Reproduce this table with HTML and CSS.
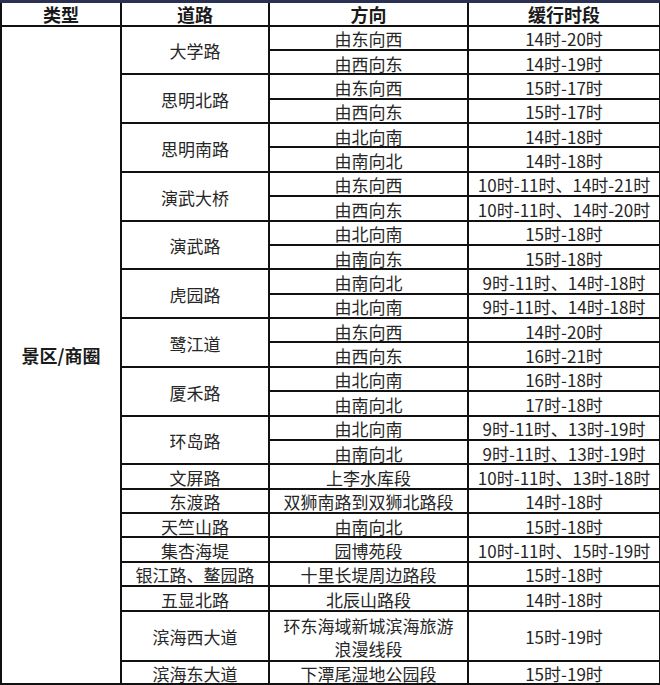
FILE: index.html
```html
<!DOCTYPE html>
<html lang="zh-CN">
<head>
<meta charset="utf-8">
<link rel="stylesheet" href="styles.css">
</head>
<body>
<table class="grid">
  <colgroup>
    <col class="c-type"><col class="c-road"><col class="c-dir"><col class="c-time">
  </colgroup>
  <thead>
    <tr class="head"><th>类型</th><th>道路</th><th>方向</th><th>缓行时段</th></tr>
  </thead>
  <tbody>
    <tr><td class="type" rowspan="26">景区/商圈</td><td rowspan="2">大学路</td><td>由东向西</td><td>14时-20时</td></tr>
    <tr><td>由西向东</td><td>14时-19时</td></tr>
    <tr><td rowspan="2">思明北路</td><td>由东向西</td><td>15时-17时</td></tr>
    <tr><td>由西向东</td><td>15时-17时</td></tr>
    <tr><td rowspan="2">思明南路</td><td>由北向南</td><td>14时-18时</td></tr>
    <tr><td>由南向北</td><td>14时-18时</td></tr>
    <tr><td rowspan="2">演武大桥</td><td>由东向西</td><td>10时-11时、14时-21时</td></tr>
    <tr><td>由西向东</td><td>10时-11时、14时-20时</td></tr>
    <tr><td rowspan="2">演武路</td><td>由北向南</td><td>15时-18时</td></tr>
    <tr><td>由南向东</td><td>15时-18时</td></tr>
    <tr><td rowspan="2">虎园路</td><td>由南向北</td><td>9时-11时、14时-18时</td></tr>
    <tr><td>由北向南</td><td>9时-11时、14时-18时</td></tr>
    <tr><td rowspan="2">鹭江道</td><td>由东向西</td><td>14时-20时</td></tr>
    <tr><td>由西向东</td><td>16时-21时</td></tr>
    <tr><td rowspan="2">厦禾路</td><td>由北向南</td><td>16时-18时</td></tr>
    <tr><td>由南向北</td><td>17时-18时</td></tr>
    <tr><td rowspan="2">环岛路</td><td>由北向南</td><td>9时-11时、13时-19时</td></tr>
    <tr><td>由南向北</td><td>9时-11时、13时-19时</td></tr>
    <tr><td>文屏路</td><td>上李水库段</td><td>10时-11时、13时-18时</td></tr>
    <tr><td>东渡路</td><td>双狮南路到双狮北路段</td><td>14时-18时</td></tr>
    <tr><td>天竺山路</td><td>由南向北</td><td>15时-18时</td></tr>
    <tr><td>集杏海堤</td><td>园博苑段</td><td>10时-11时、15时-19时</td></tr>
    <tr><td>银江路、鳌园路</td><td>十里长堤周边路段</td><td>15时-18时</td></tr>
    <tr><td>五显北路</td><td>北辰山路段</td><td>14时-18时</td></tr>
    <tr class="tall"><td>滨海西大道</td><td>环东海域新城滨海旅游<br>浪漫线段</td><td>15时-19时</td></tr>
    <tr class="last"><td>滨海东大道</td><td>下潭尾湿地公园段</td><td>15时-19时</td></tr>
  </tbody>
</table>
</body>
</html>
```

FILE: styles.css
```css
html, body {
  margin: 0;
  padding: 0;
  background: #ffffff;
}

.grid {
  width: 659px;
  border-collapse: collapse;
  table-layout: fixed;
  border-top: 3px solid #2a3152;
  font-family: "Noto Sans CJK SC", "Noto Sans", sans-serif;
  color: #262626;
}

.c-type { width: 120px; }
.c-road { width: 148px; }
.c-dir { width: 199px; }
.c-time { width: 192px; }

.grid th,
.grid td {
  border: 2px solid #111111;
  padding: 2px 0 0 0;
  text-align: center;
  vertical-align: middle;
  white-space: nowrap;
  line-height: 19px;
}

.grid th {
  font-size: 18px;
  font-weight: 700;
  color: #1a1a1a;
  border-top: none;
}

.grid td {
  font-size: 17px;
  font-weight: 400;
}

.head { height: 24px; }

.grid tbody tr { height: 24.38px; }

.grid tbody tr.tall { height: 47.4px; }

.grid tbody tr.last { height: 23px; }

.grid td.type {
  font-size: 18px;
  font-weight: 700;
  color: #1a1a1a;
}

.grid tr.tall td { line-height: 23px; }
```
